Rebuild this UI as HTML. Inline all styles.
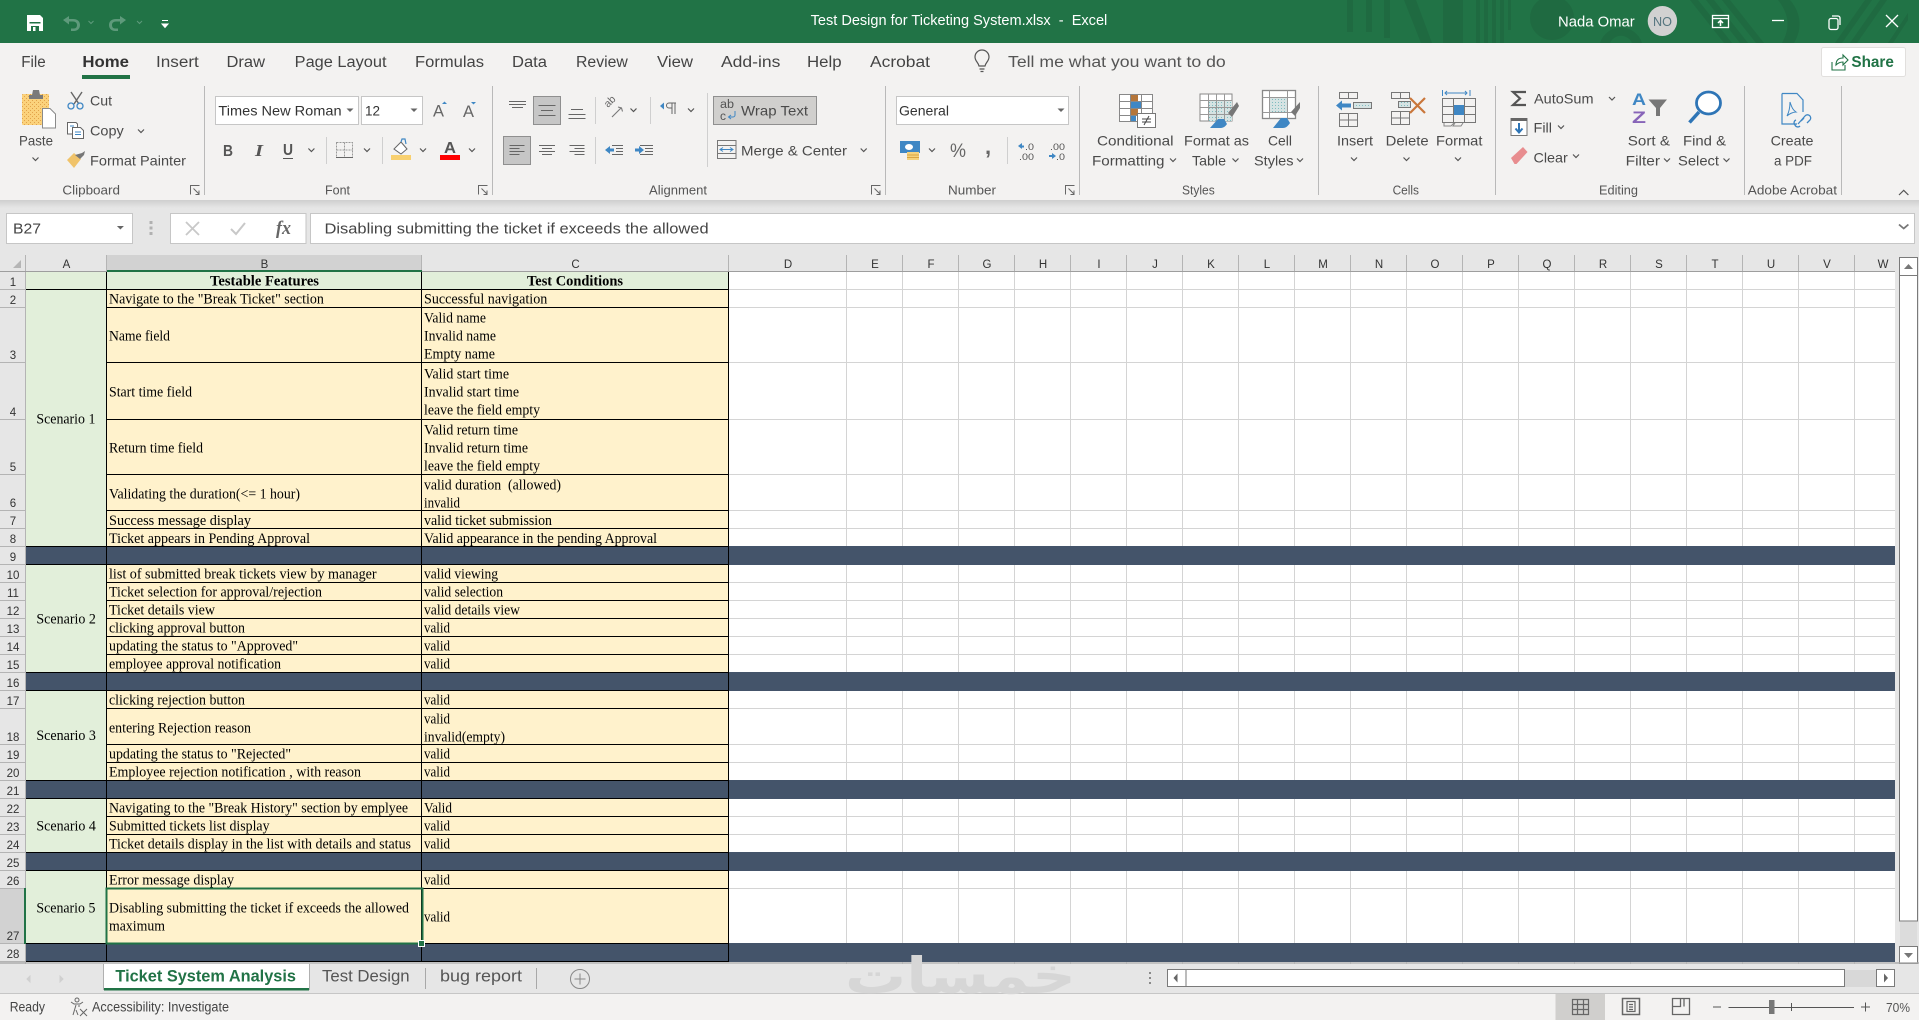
<!DOCTYPE html>
<html><head><meta charset="utf-8"><title>Test Design for Ticketing System.xlsx - Excel</title>
<style>
html,body{margin:0;padding:0;background:#fff;overflow:hidden;width:1919px;height:1020px}
svg{display:block;font-family:"Liberation Sans",sans-serif}
text{white-space:pre}
.t{font-size:15.5px;fill:#444;transform:translateY(.6px)}
.r{font-size:14px;fill:#4a4a4a;transform:translateY(.4px)}
.g{font-size:13px;fill:#555;transform:translateY(.4px)}
.c{font-family:"Liberation Serif",serif;font-size:14.2px;fill:#000;transform:translateY(.6px)}
.b{font-family:"Liberation Serif",serif;font-size:14.2px;font-weight:bold;fill:#000;transform:translateY(.6px)}
.n{font-size:11.5px;fill:#333;text-anchor:middle}
.h{font-size:11.5px;fill:#333;text-anchor:middle}
.ln{stroke-width:1;fill:none}
</style></head><body>
<svg width="1919" height="1020" viewBox="0 0 1919 1020" xmlns="http://www.w3.org/2000/svg">
<defs>
<path id="v" d="M-3,-1.5L0,1.5L3,-1.5" fill="none" stroke="#555" stroke-width="1.2"/>
<path id="dd" d="M-3.5,-1.5H3.5L0,2Z" fill="#666"/>
<g id="lau" fill="none" stroke="#666" stroke-width="1"><path d="M-4.5,4.5V-4.5H4.5M-1.5,-1.5L4,4M4,0.5V4.5H0.5"/></g>
<linearGradient id="sh" x1="0" y1="0" x2="0" y2="1"><stop offset="0" stop-color="#cfcfcf"/><stop offset="1" stop-color="#e6e6e6"/></linearGradient>
<pattern id="dot" width="3" height="3" patternUnits="userSpaceOnUse"><rect width="3" height="3" fill="#d6e3e3"/><rect width="1" height="1" fill="#7fbcc0"/></pattern>
<pattern id="pdot" width="4" height="4" patternUnits="userSpaceOnUse"><rect width="4" height="4" fill="#fbd27c"/><rect width="1" height="1" fill="#e2a24a"/><rect x="2" y="2" width="1" height="1" fill="#e2a24a"/></pattern>
</defs>

<!-- title bar -->
<rect width="1919" height="43" fill="#217346"/>
<g fill="#1f6a41">
<rect x="1347" width="6" height="32"/><rect x="1366" width="6" height="32"/><rect x="1384" width="6" height="38"/>
<path d="M1404,0H1416L1432,43H1421Z"/><rect x="1443" width="20" height="43"/><rect x="1476" width="4" height="43"/><rect x="1484" width="4" height="43"/><rect x="1492" width="4" height="43"/><rect x="1500" width="4" height="43"/><rect x="1508" width="3" height="30"/>
<circle cx="1552" cy="18" r="22"/>
<path d="M1690,0h8l34,43h-8ZM1706,0h8l34,43h-8ZM1722,0h8l34,43h-8Z"/>
<path d="M1778,0h12c12,14 12,30 4,43h-12c8,-14 8,-28 -4,-43Z"/>
<path d="M1835,43l30,-43h7l-30,43ZM1850,43l30,-43h7l-30,43ZM1888,43l20,-30v7l-15,23Z"/>
<path d="M1600,43a22,22 0 0 1 42,0h-10a12,12 0 0 0 -22,0Z"/>
</g>
<!-- QAT -->
<g>
<path d="M27,15H40L43,18V31H27Z" fill="#fff"/><rect x="29.500" y="22" width="11" height="1.500" fill="#217346"/><rect x="31" y="26" width="8" height="5" fill="#217346"/><rect x="33" y="27" width="2.500" height="4" fill="#fff"/>
<path d="M63,20l6,-4v3h4c5,0 7,3 7,6 0,4 -3,6 -6,6h-3v-2.500h3c2,0 3,-1.500 3,-3.500 0,-2 -1.500,-3.500 -4,-3.500h-4v3Z" fill="#5e9a7b"/>
<path d="M126,20l-6,-4v3h-4c-5,0 -7,3 -7,6 0,4 3,6 6,6h3v-2.500h-3c-2,0 -3,-1.500 -3,-3.500 0,-2 1.500,-3.500 4,-3.500h4v3Z" fill="#5e9a7b"/>
<path d="M88.500,21l2.500,2.500L93.500,21M137,21l2.500,2.500L142,21" fill="none" stroke="#5e9a7b" stroke-width="1"/>
<path d="M162,20.500h6M162,24h6l-3,3.500Z" stroke="#fff" stroke-width="1" fill="#fff"/>
</g>
<text x="810.6" y="25" textLength="296.700" lengthAdjust="spacingAndGlyphs" style="font-size:15px;fill:#fff">Test Design for Ticketing System.xlsx  -  Excel</text>
<text x="1558" y="26.500" textLength="76.700" lengthAdjust="spacingAndGlyphs" style="font-size:15px;fill:#fff">Nada Omar</text>
<ellipse cx="1662.400" cy="21" rx="14.700" ry="15" fill="#d1d1d1"/>
<text x="1653" y="26" textLength="19" lengthAdjust="spacingAndGlyphs" style="font-size:13px;fill:#55757f">NO</text>
<g fill="none" stroke="#fff" stroke-width="1.300">
<rect x="1712.500" y="15.500" width="16" height="12"/><path d="M1712.500,18.500H1728.500"/><path d="M1720.500,26V21M1718,23l2.500,-2.500L1723,23" stroke-width="1.500"/>
<path d="M1772,20.500H1784"/>
<rect x="1829" y="18.500" width="9" height="11" rx="2"/><path d="M1832,16h6a2,2 0 0 1 2,2v7"/>
<path d="M1886,15L1898,27M1898,15L1886,27"/>
</g>

<!-- ribbon -->
<rect y="43" width="1919" height="157" fill="#f3f2f1"/>
<text class="t" x="21.2" y="66.500" textLength="24.500" lengthAdjust="spacingAndGlyphs">File</text>
<text class="t" x="82.400" y="66.500" textLength="46.600" lengthAdjust="spacingAndGlyphs" style="font-weight:bold;fill:#333">Home</text>
<rect x="82" y="75" width="48" height="4" fill="#217346"/>
<text class="t" x="156" y="66.500" textLength="42.800" lengthAdjust="spacingAndGlyphs">Insert</text>
<text class="t" x="226.500" y="66.500" textLength="38.500" lengthAdjust="spacingAndGlyphs">Draw</text>
<text class="t" x="294.700" y="66.500" textLength="91.800" lengthAdjust="spacingAndGlyphs">Page Layout</text>
<text class="t" x="415" y="66.500" textLength="69" lengthAdjust="spacingAndGlyphs">Formulas</text>
<text class="t" x="512" y="66.500" textLength="35" lengthAdjust="spacingAndGlyphs">Data</text>
<text class="t" x="576" y="66.500" textLength="51.800" lengthAdjust="spacingAndGlyphs">Review</text>
<text class="t" x="657" y="66.500" textLength="36" lengthAdjust="spacingAndGlyphs">View</text>
<text class="t" x="721" y="66.500" textLength="59.400" lengthAdjust="spacingAndGlyphs">Add-ins</text>
<text class="t" x="807" y="66.500" textLength="34.600" lengthAdjust="spacingAndGlyphs">Help</text>
<text class="t" x="870" y="66.500" textLength="60" lengthAdjust="spacingAndGlyphs">Acrobat</text>
<g fill="none" stroke="#555" stroke-width="1.200"><path d="M979,66c-1,-4 -4,-5 -4,-9a7,7 0 0 1 14,0c0,4 -3,5 -4,9Z"/><path d="M979.500,69h5M980.500,71.500h3"/></g>
<text class="t" x="1008" y="66.500" textLength="217.700" lengthAdjust="spacingAndGlyphs" style="fill:#555">Tell me what you want to do</text>
<rect x="1821.500" y="47.500" width="84" height="29" rx="2" fill="#fff" stroke="#e1dfdd"/>
<path d="M1832,62v8h13v-5M1836,65c0,-5 3,-7 7,-7v-3l5,5l-5,5v-3c-3,0 -5,1 -7,3Z" fill="none" stroke="#217346" stroke-width="1.100"/>
<text x="1851.400" y="67" textLength="42.500" lengthAdjust="spacingAndGlyphs" style="font-size:15.500px;font-weight:bold;fill:#217346">Share</text>

<!-- separators -->
<path d="M204.500,86V195M492.500,86V195M885.500,86V195M1079.500,86V195M1318.500,86V195M1495.500,86V195M1744.500,86V195M1841.500,86V195" stroke="#b9b9b9" fill="none"/>
<path d="M326.500,137V164M382.500,137V164M595.500,97V124M595.500,137V164M650.500,97V124M707.500,93V167M1007.500,137V164" stroke="#cfcfcf" fill="none"/>

<!-- clipboard -->
<rect x="22" y="94" width="27" height="31" rx="1" fill="url(#pdot)"/>
<path d="M29,95h3l1,-5h6l1,5h3v4H29Z" fill="#7a7a7a"/>
<path d="M42.500,108.500H50L55.500,114V128H42.500Z" fill="#fff" stroke="#8a8a8a"/>
<text class="r" x="19" y="145" textLength="34" lengthAdjust="spacingAndGlyphs">Paste</text>
<use href="#v" x="35.500" y="159"/>
<g fill="none"><path d="M71,92L79,104M82,92L74,104" stroke="#666" stroke-width="1.400"/><circle cx="71" cy="106" r="3" stroke="#3f87c4" stroke-width="1.300"/><circle cx="80" cy="106" r="3" stroke="#3f87c4" stroke-width="1.300"/></g>
<text class="r" x="90" y="105" textLength="22" lengthAdjust="spacingAndGlyphs">Cut</text>
<g fill="#fff" stroke="#666"><path d="M67.500,122.500H76L77.500,124V134H67.500Z"/><path d="M72.500,127.500H80.500L83.500,130.500V138.500H72.500Z"/></g><path d="M75,132h6M75,134.500h6M70,126h4" stroke="#3f87c4"/>
<text class="r" x="90" y="135" textLength="33.700" lengthAdjust="spacingAndGlyphs">Copy</text><use href="#v" x="141" y="131"/>
<path d="M67,160l7,-7 7,6 -7,9Z" fill="#f0c36a"/><path d="M75,155l7,-2 3,-2 -1,4 -4,4Z" fill="#777"/>
<text class="r" x="90" y="165" textLength="96" lengthAdjust="spacingAndGlyphs">Format Painter</text>
<text class="g" x="62.400" y="194.300" textLength="57.600" lengthAdjust="spacingAndGlyphs">Clipboard</text><use href="#lau" x="195" y="190"/>

<!-- font -->
<rect x="215.500" y="96.500" width="143" height="28" fill="#fff" stroke="#c6c6c6"/>
<rect x="361.500" y="96.500" width="61" height="28" fill="#fff" stroke="#c6c6c6"/>
<text class="r" x="218.400" y="115" textLength="123.200" lengthAdjust="spacingAndGlyphs" style="fill:#333">Times New Roman</text><use href="#dd" x="350" y="110"/>
<text class="r" x="365" y="115" textLength="15" lengthAdjust="spacingAndGlyphs" style="fill:#333">12</text><use href="#dd" x="414" y="110"/>
<text x="433" y="116.500" textLength="11" lengthAdjust="spacingAndGlyphs" style="font-size:17px;fill:#666">A</text><path d="M442,104h5l-2.500,-2.500Z" fill="#3f87c4"/>
<text x="463" y="117" textLength="11" lengthAdjust="spacingAndGlyphs" style="font-size:17px;fill:#666">A</text><path d="M471,102h5l-2.500,2.500Z" fill="#3f87c4"/>
<text x="223" y="156" style="font-size:16px;font-weight:bold;fill:#555" textLength="10" lengthAdjust="spacingAndGlyphs">B</text>
<text x="255" y="156" style="font-size:17px;font-weight:bold;font-style:italic;font-family:'Liberation Serif',serif;fill:#555" textLength="8" lengthAdjust="spacingAndGlyphs">I</text>
<text x="283" y="155" style="font-size:15.500px;font-weight:bold;fill:#555" textLength="10" lengthAdjust="spacingAndGlyphs">U</text><path d="M283,158.500H293" stroke="#555"/><use href="#v" x="311.400" y="150"/>
<path d="M336.500,142.500H352.500V157.500H336.500ZM344.500,142.500V157.500M336.500,150H352.500" fill="none" stroke="#999" stroke-dasharray="2 1"/><path d="M336,157.500H353" stroke="#666"/><use href="#v" x="367" y="150"/>
<path d="M394,149l7,-7 6,7 -6,5Z" fill="#fff" stroke="#666"/><path d="M401,142l1,-3h3l1,5" fill="none" stroke="#3f87c4" stroke-width="1.200"/>
<rect x="391" y="155" width="20" height="5" fill="#f8d06f"/><use href="#v" x="423" y="150"/>
<text x="444" y="153" textLength="12" lengthAdjust="spacingAndGlyphs" style="font-size:15.500px;font-weight:bold;fill:#555">A</text><rect x="440" y="155" width="20" height="5" fill="#f00"/><use href="#v" x="472" y="150"/>
<text class="g" x="325" y="194.300" textLength="25" lengthAdjust="spacingAndGlyphs">Font</text><use href="#lau" x="483" y="190"/>

<!-- alignment -->
<rect x="533.500" y="96.500" width="27" height="28" fill="#c6c6c6" stroke="#8f8f8f"/>
<rect x="503.500" y="136.500" width="27" height="28" fill="#c6c6c6" stroke="#8f8f8f"/>
<path d="M509,101.500h17M509,104.500h17M512,107.500h11M538.500,105.500h17M541,110.500h12M538.500,115.500h17M571,109.500h12M568.500,114.500h17M568.500,118.500h17M509.500,145.500h15M509.500,148.500h10M509.500,151.500h15M509.500,154.500h10M539,145.500h16M542,148.500h10M539,151.500h16M542,154.500h10M569.500,145.500h15M574.500,148.500h10M569.500,151.500h15M574.500,154.500h10" stroke="#666" fill="none"/>
<text x="0" y="0" transform="translate(608,108) rotate(-45)" style="font-size:10.500px;fill:#666">ab</text><path d="M612,117l9,-9M618,107l3.500,1 1,3.500" fill="none" stroke="#777" stroke-width="1.100"/><use href="#v" x="633.500" y="110"/>
<path d="M660,106l4,-3.500v7Z" fill="#3f87c4"/><path d="M669,103h7M672,103v11M675,103v11M669,103a2.500,2.500 0 0 0 0,5h3" fill="none" stroke="#666"/><use href="#v" x="691" y="110"/>
<path d="M612,145.500h11M616,148.500h7M616,151.500h7M612,154.500h11M640,145.500h13M645,148.500h8M645,151.500h8M640,154.500h13" stroke="#666" fill="none"/>
<path d="M605,150l5,-4v2.500h4v3h-4V154Z" fill="#3f87c4"/><path d="M644,150l-5,-4v2.500h-4v3h4V154Z" fill="#3f87c4"/>
<rect x="713.500" y="96.500" width="103" height="28" fill="#d0cfcd" stroke="#8f8f8f"/>
<text x="720" y="108" textLength="14" lengthAdjust="spacingAndGlyphs" style="font-size:11.500px;fill:#555">ab</text><text x="720" y="120" textLength="6" lengthAdjust="spacingAndGlyphs" style="font-size:11.500px;fill:#555">c</text>
<path d="M735,111v4a2,2 0 0 1 -2,2h-4M731,115l-2.500,2 2.500,2" fill="none" stroke="#3f87c4"/>
<text class="r" x="741" y="115" textLength="67" lengthAdjust="spacingAndGlyphs">Wrap Text</text>
<path d="M717.500,140.500H736V158.500H717.500ZM717.500,145.500H736M717.500,153.500H736" fill="none" stroke="#777"/><path d="M720,149.500h13M723,147.500l-3,2 3,2M730,147.500l3,2 -3,2" fill="none" stroke="#3f87c4"/>
<text class="r" x="741" y="155" textLength="106" lengthAdjust="spacingAndGlyphs">Merge &amp; Center</text><use href="#v" x="863.700" y="150"/>
<text class="g" x="649" y="194.300" textLength="58" lengthAdjust="spacingAndGlyphs">Alignment</text><use href="#lau" x="876" y="190"/>

<!-- number -->
<rect x="896.500" y="96.500" width="172" height="28" fill="#fff" stroke="#c6c6c6"/>
<text class="r" x="899" y="115" textLength="50" lengthAdjust="spacingAndGlyphs" style="fill:#333">General</text><use href="#dd" x="1061" y="110"/>
<rect x="900" y="141" width="20" height="12" fill="#3f87c4"/><ellipse cx="909" cy="147" rx="4" ry="3" fill="#fff"/><rect x="907" y="152" width="12" height="8" fill="#f4d27c"/><path d="M907,155h12M907,157.500h12" stroke="#d9a441"/>
<use href="#v" x="932" y="150"/>
<text x="950" y="157" textLength="16" lengthAdjust="spacingAndGlyphs" style="font-size:19px;fill:#666">%</text>
<text x="985" y="154" style="font-size:22px;font-weight:bold;fill:#666">,</text>
<text x="1025" y="150" textLength="9" lengthAdjust="spacingAndGlyphs" style="font-size:9.500px;fill:#555">.0</text><text x="1019" y="160" textLength="15" lengthAdjust="spacingAndGlyphs" style="font-size:9.500px;fill:#555">.00</text><path d="M1018,146l4,-3v6Z" fill="#3f87c4"/><path d="M1021,145.500h3v2h-3Z" fill="#3f87c4"/>
<text x="1050" y="150" textLength="15" lengthAdjust="spacingAndGlyphs" style="font-size:9.500px;fill:#555">.00</text><text x="1056" y="160" textLength="9" lengthAdjust="spacingAndGlyphs" style="font-size:9.500px;fill:#555">.0</text><path d="M1056,156l-4,-3v6Z" fill="#3f87c4"/><path d="M1049,155h3v2h-3Z" fill="#3f87c4"/>
<text class="g" x="948" y="194.300" textLength="48" lengthAdjust="spacingAndGlyphs">Number</text><use href="#lau" x="1070" y="190"/>

<!-- styles -->
<rect x="1119.500" y="94.500" width="33" height="27" fill="#fff" stroke="#888"/>
<rect x="1130" y="95" width="8" height="6" fill="#b5763a"/><rect x="1130" y="102" width="11" height="6" fill="#3f87c4"/><rect x="1130" y="109" width="8" height="6" fill="#b5763a"/><rect x="1130" y="116" width="6" height="5" fill="#3f87c4"/>
<path d="M1130.500,94.500V121.500M1141.500,94.500V121.500M1119.500,101.500H1152.500M1119.500,108.500H1152.500M1119.500,115.500H1152.500" stroke="#888" fill="none"/>
<rect x="1137.500" y="113.500" width="18" height="14" fill="#fff" stroke="#777"/><path d="M1142,119h9M1142,122h9M1149,116l-5,9" stroke="#444" fill="none"/>
<text class="r" x="1097" y="145" textLength="76.500" lengthAdjust="spacingAndGlyphs">Conditional</text>
<text class="r" x="1092" y="165" textLength="72.500" lengthAdjust="spacingAndGlyphs">Formatting</text><use href="#v" x="1173" y="160"/>
<rect x="1200" y="94" width="32" height="27" fill="#fff" stroke="#888"/><rect x="1208" y="101" width="24" height="20" fill="url(#dot)"/>
<path d="M1208.500,94V121M1216.500,94V121M1224.500,94V121M1200,100.500H1232M1200,107.500H1232M1200,114.500H1232" stroke="#999" fill="none"/>
<path d="M1237,102l-9,11 4,4 7,-11Z" fill="#777"/><path d="M1210,128l8,-9 6,0 3,5c-2,3 -4,4 -7,4Z" fill="#3f87c4"/>
<text class="r" x="1184" y="145" textLength="65" lengthAdjust="spacingAndGlyphs">Format as</text>
<text class="r" x="1192" y="165" textLength="34" lengthAdjust="spacingAndGlyphs">Table</text><use href="#v" x="1235.500" y="160"/>
<rect x="1262.500" y="90.500" width="33" height="28" fill="#fff" stroke="#888" stroke-width="1.300"/><rect x="1269" y="98" width="18" height="14" fill="url(#dot)"/><path d="M1262.500,97.500H1295.500M1262.500,112.500H1295.500M1269.500,90.500V118.500M1287.500,90.500V118.500" stroke="#999" fill="none"/>
<path d="M1300,102l-9,10 4,4 5,-8Z" fill="#777"/><path d="M1273,128l8,-10 6,0 3,5c-2,3 -4,5 -7,5Z" fill="#3f87c4"/>
<text class="r" x="1268" y="145" textLength="24" lengthAdjust="spacingAndGlyphs">Cell</text>
<text class="r" x="1254" y="165" textLength="39.500" lengthAdjust="spacingAndGlyphs">Styles</text><use href="#v" x="1300" y="160"/>
<text class="g" x="1182" y="194.300" textLength="32.700" lengthAdjust="spacingAndGlyphs">Styles</text>

<!-- cells -->
<g fill="none" stroke="#777">
<path d="M1339.500,92.500h18v6h-18ZM1348.500,92.500v6M1339.500,113.500h18v13h-18ZM1339.500,120h18M1348.500,113.500v13"/>
<path d="M1391.500,92.500h18v6h-18ZM1400.500,92.500v6M1391.500,111.500h18v13h-18ZM1391.500,118h18M1400.500,111.500v13"/>
<rect x="1442.500" y="98.500" width="33" height="24"/><path d="M1453.500,98.500v24M1464.500,98.500v24M1442.500,106.500h33M1442.500,114.500h33"/>
</g>
<rect x="1353.500" y="102.500" width="18" height="6" fill="url(#dot)" stroke="#777"/>
<path d="M1336,105.500l6,-5v3h9v4h-9v3Z" fill="#3f87c4"/>
<text class="r" x="1337" y="145" textLength="36" lengthAdjust="spacingAndGlyphs">Insert</text><use href="#v" x="1354" y="159"/>
<rect x="1398.500" y="101.500" width="12" height="6" fill="url(#dot)" stroke="#777"/>
<path d="M1410,98L1425,113M1425,98L1410,113" stroke="#c9763a" stroke-width="2.200"/>
<text class="r" x="1385.700" y="145" textLength="42.900" lengthAdjust="spacingAndGlyphs">Delete</text><use href="#v" x="1406.500" y="159"/>
<path d="M1442.500,90v6M1470,90v6M1445,93h22M1447,91l-2,2 2,2M1465,91l2,2 -2,2" fill="none" stroke="#3f87c4"/><rect x="1454" y="105" width="10" height="10" fill="#3f87c4"/>
<path d="M1444,123v3h7l3,-3M1455,123l-2,3h8l2,-3" fill="none" stroke="#888"/>
<text class="r" x="1436" y="145" textLength="46.400" lengthAdjust="spacingAndGlyphs">Format</text><use href="#v" x="1458" y="159"/>
<text class="g" x="1392.600" y="194.300" textLength="26.400" lengthAdjust="spacingAndGlyphs">Cells</text>

<!-- editing -->
<path d="M1526,92H1513L1520,98.500L1513,105H1526" fill="none" stroke="#555" stroke-width="2.200"/>
<text class="r" x="1534" y="103.300" textLength="59.500" lengthAdjust="spacingAndGlyphs">AutoSum</text><use href="#v" x="1612" y="98.500"/>
<rect x="1511" y="118.500" width="16" height="17" fill="#fff" stroke="#777"/><rect x="1511" y="118" width="16" height="3" fill="#666"/><path d="M1519,123v9M1515.500,128.500l3.500,4 3.500,-4" fill="none" stroke="#2e75b6" stroke-width="2"/>
<text class="r" x="1533.500" y="132" textLength="18.500" lengthAdjust="spacingAndGlyphs">Fill</text><use href="#v" x="1561" y="127"/>
<path d="M1511,158l12,-11 4.500,5 -11,12h-2Z" fill="#e88d8f"/>
<text class="r" x="1533.500" y="162" textLength="34.300" lengthAdjust="spacingAndGlyphs">Clear</text><use href="#v" x="1576" y="156"/>
<text x="1632" y="105" textLength="14" lengthAdjust="spacingAndGlyphs" style="font-size:17px;font-weight:bold;fill:#3f87c4">A</text>
<text x="1632" y="123" textLength="14" lengthAdjust="spacingAndGlyphs" style="font-size:17px;font-weight:bold;fill:#8764b8">Z</text>
<path d="M1648.500,99.500H1667L1660,108V116H1656V108Z" fill="#777"/>
<text class="r" x="1627.800" y="145" textLength="42.200" lengthAdjust="spacingAndGlyphs">Sort &amp;</text>
<text class="r" x="1625.700" y="165" textLength="34.300" lengthAdjust="spacingAndGlyphs">Filter</text><use href="#v" x="1667" y="160"/>
<ellipse cx="1708.500" cy="103" rx="12" ry="11" fill="#fff" stroke="#2e75b6" stroke-width="2.800"/><path d="M1699,112L1689.500,122.500" stroke="#2e75b6" stroke-width="3.500"/>
<text class="r" x="1683" y="145" textLength="43" lengthAdjust="spacingAndGlyphs">Find &amp;</text>
<text class="r" x="1678" y="165" textLength="41" lengthAdjust="spacingAndGlyphs">Select</text><use href="#v" x="1726.500" y="160"/>
<text class="g" x="1599" y="194.300" textLength="39" lengthAdjust="spacingAndGlyphs">Editing</text>

<!-- acrobat -->
<path d="M1782,93.500H1797L1803,100V112M1782,93.500V124H1797" fill="none" stroke="#3f87c4" stroke-width="1.200"/>
<path d="M1790,102c2,6 3,8 6,10c-3,0 -7,2 -9,4c2,-4 3,-9 3,-14Z" fill="none" stroke="#3f87c4"/>
<path d="M1798,124l7,-8a3,3 0 0 1 5,4l-3,3M1804,118l-3,3M1796,120a3,3 0 0 0 -1,5a3,3 0 0 0 5,1" fill="none" stroke="#3f87c4" stroke-width="1.300"/>
<text class="r" x="1770.600" y="145" textLength="42.900" lengthAdjust="spacingAndGlyphs">Create</text>
<text class="r" x="1774" y="165" textLength="38" lengthAdjust="spacingAndGlyphs">a PDF</text>
<text class="g" x="1747.800" y="194.300" textLength="89.200" lengthAdjust="spacingAndGlyphs">Adobe Acrobat</text>
<path d="M1899,195l4.700,-4.700 4.700,4.700" fill="none" stroke="#555" stroke-width="1.200"/>

<!-- formula bar -->
<rect y="200" width="1919" height="764" fill="#e6e6e6"/>
<rect y="200" width="1919" height="8" fill="url(#sh)"/>
<g fill="#fff" stroke="#c6c6c6"><rect x="6.500" y="213.500" width="126" height="30"/><rect x="170.500" y="213.500" width="135.500" height="30"/><rect x="310.500" y="213.500" width="1604" height="30"/></g>
<text class="r" x="13" y="233" textLength="28" lengthAdjust="spacingAndGlyphs" style="font-size:15px;fill:#444">B27</text><use href="#dd" x="120.400" y="227.500"/>
<rect x="149.500" y="221" width="3" height="3" fill="#b1b1b1"/><rect x="149.500" y="226.500" width="3" height="3" fill="#b1b1b1"/><rect x="149.500" y="232" width="3" height="3" fill="#b1b1b1"/>
<path d="M186,222L199,235M199,222L186,235" stroke="#c8c8c8" stroke-width="1.800"/>
<path d="M231,229l5,5 9,-11" fill="none" stroke="#c8c8c8" stroke-width="2"/>
<text x="276" y="234" style="font-family:'Liberation Serif',serif;font-style:italic;font-weight:bold;font-size:19px;fill:#666" textLength="15" lengthAdjust="spacingAndGlyphs">fx</text>
<text class="r" x="324.500" y="233.300" textLength="384.100" lengthAdjust="spacingAndGlyphs" style="font-size:15px;fill:#444">Disabling submitting the ticket if exceeds the allowed</text>
<path d="M1899,224.500l4.700,4 4.700,-4" fill="none" stroke="#777" stroke-width="1.800"/>

<!-- column headers -->
<rect x="107" y="255" width="315" height="16" fill="#d2d2d2"/>
<path d="M25.500,255V271M106.500,255V271M421.500,255V271M728.500,255V271M846.500,255V271M902.500,255V271M958.500,255V271M1014.500,255V271M1070.500,255V271M1126.500,255V271M1182.500,255V271M1238.500,255V271M1294.500,255V271M1350.500,255V271M1406.500,255V271M1462.500,255V271M1518.500,255V271M1574.500,255V271M1630.500,255V271M1686.500,255V271M1742.500,255V271M1798.500,255V271M1854.500,255V271" stroke="#b4b4b4" fill="none"/>
<path d="M21,260V268H13Z" fill="#b5b5b5"/>
<rect x="0" y="271" width="1895" height="1" fill="#9e9e9e"/>
<rect x="107" y="270" width="315" height="2" fill="#217346"/>
<text class="h" x="66.500" y="268">A</text><text class="h" x="264.500" y="268">B</text><text class="h" x="575.500" y="268">C</text><text class="h" x="788" y="268">D</text><text class="h" x="875" y="268">E</text><text class="h" x="931" y="268">F</text><text class="h" x="987" y="268">G</text><text class="h" x="1043" y="268">H</text><text class="h" x="1099" y="268">I</text><text class="h" x="1155" y="268">J</text><text class="h" x="1211" y="268">K</text><text class="h" x="1267" y="268">L</text><text class="h" x="1323" y="268">M</text><text class="h" x="1379" y="268">N</text><text class="h" x="1435" y="268">O</text><text class="h" x="1491" y="268">P</text><text class="h" x="1547" y="268">Q</text><text class="h" x="1603" y="268">R</text><text class="h" x="1659" y="268">S</text><text class="h" x="1715" y="268">T</text><text class="h" x="1771" y="268">U</text><text class="h" x="1827" y="268">V</text><text class="h" x="1883" y="268">W</text>

<!-- grid -->
<rect x="26" y="272" width="1869" height="692" fill="#fff"/>
<path d="M846.500,272V964M902.500,272V964M958.500,272V964M1014.500,272V964M1070.500,272V964M1126.500,272V964M1182.500,272V964M1238.500,272V964M1294.500,272V964M1350.500,272V964M1406.500,272V964M1462.500,272V964M1518.500,272V964M1574.500,272V964M1630.500,272V964M1686.500,272V964M1742.500,272V964M1798.500,272V964M1854.500,272V964M729,289.500H1895M729,307.500H1895M729,362.500H1895M729,419.500H1895M729,474.500H1895M729,510.500H1895M729,528.500H1895M729,582.500H1895M729,600.500H1895M729,618.500H1895M729,636.500H1895M729,654.500H1895M729,708.500H1895M729,744.500H1895M729,762.500H1895M729,816.500H1895M729,834.500H1895M729,888.500H1895M729,943.500H1895" stroke="#d4d4d4" fill="none"/>

<!-- fills -->
<rect x="26" y="272" width="702" height="18" fill="#e2efda"/>
<rect x="107" y="290" width="621" height="256" fill="#fff2cc"/>
<rect x="107" y="565" width="621" height="107" fill="#fff2cc"/>
<rect x="107" y="691" width="621" height="89" fill="#fff2cc"/>
<rect x="107" y="799" width="621" height="53" fill="#fff2cc"/>
<rect x="107" y="871" width="621" height="72" fill="#fff2cc"/>
<g fill="#e2efda"><rect x="26" y="290" width="80" height="256"/><rect x="26" y="565" width="80" height="107"/><rect x="26" y="691" width="80" height="89"/><rect x="26" y="799" width="80" height="53"/><rect x="26" y="871" width="80" height="72"/></g>
<g fill="#44546a"><rect x="26" y="546" width="1869" height="19"/><rect x="26" y="672" width="1869" height="19"/><rect x="26" y="780" width="1869" height="19"/><rect x="26" y="852" width="1869" height="19"/><rect x="26" y="943" width="1869" height="19"/></g>
<path d="M106.500,272V962M421.500,272V962M728.500,272V962" stroke="#000" fill="none"/>
<path d="M26,289.500H728M107,307.500H728M107,362.500H728M107,419.500H728M107,474.500H728M107,510.500H728M107,528.500H728M26,546.500H728M26,564.500H728M107,582.500H728M107,600.500H728M107,618.500H728M107,636.500H728M107,654.500H728M26,672.500H728M26,690.500H728M107,708.500H728M107,744.500H728M107,762.500H728M26,780.500H728M26,798.500H728M107,816.500H728M107,834.500H728M26,852.500H728M26,870.500H728M107,888.500H728M26,943.500H728M26,961.500H728" stroke="#000" fill="none"/>

<!-- row headers -->
<rect x="0" y="889" width="25" height="54" fill="#d2d2d2"/>
<path d="M0,289.500H25M0,307.500H25M0,362.500H25M0,419.500H25M0,474.500H25M0,510.500H25M0,528.500H25M0,546.500H25M0,564.500H25M0,582.500H25M0,600.500H25M0,618.500H25M0,636.500H25M0,654.500H25M0,672.500H25M0,690.500H25M0,708.500H25M0,744.500H25M0,762.500H25M0,780.500H25M0,798.500H25M0,816.500H25M0,834.500H25M0,852.500H25M0,870.500H25M0,888.500H25M0,943.500H25M0,961.500H25M25.500,272V964" stroke="#b4b4b4" fill="none"/>
<rect x="24" y="888" width="2" height="56" fill="#217346"/>
<g>
<text class="n" x="13" y="286">1</text><text class="n" x="13" y="304">2</text><text class="n" x="13" y="359">3</text><text class="n" x="13" y="416">4</text><text class="n" x="13" y="471">5</text><text class="n" x="13" y="507">6</text><text class="n" x="13" y="525">7</text><text class="n" x="13" y="543">8</text><text class="n" x="13" y="561">9</text><text class="n" x="13" y="579">10</text><text class="n" x="13" y="597">11</text><text class="n" x="13" y="615">12</text><text class="n" x="13" y="633">13</text><text class="n" x="13" y="651">14</text><text class="n" x="13" y="669">15</text><text class="n" x="13" y="687">16</text><text class="n" x="13" y="705">17</text><text class="n" x="13" y="741">18</text><text class="n" x="13" y="759">19</text><text class="n" x="13" y="777">20</text><text class="n" x="13" y="795">21</text><text class="n" x="13" y="813">22</text><text class="n" x="13" y="831">23</text><text class="n" x="13" y="849">24</text><text class="n" x="13" y="867">25</text><text class="n" x="13" y="885">26</text><text class="n" x="13" y="940">27</text><text class="n" x="13" y="958">28</text>
</g>

<!-- cell text -->
<text class="b" x="210" y="285" textLength="109" lengthAdjust="spacingAndGlyphs">Testable Features</text>
<text class="b" x="527" y="285" textLength="96" lengthAdjust="spacingAndGlyphs">Test Conditions</text>
<text class="c" x="36.400" y="422.700" textLength="59" lengthAdjust="spacingAndGlyphs">Scenario 1</text>
<text class="c" x="36.400" y="623" textLength="59.500" lengthAdjust="spacingAndGlyphs">Scenario 2</text>
<text class="c" x="36.400" y="739.300" textLength="59.500" lengthAdjust="spacingAndGlyphs">Scenario 3</text>
<text class="c" x="36.400" y="830" textLength="59.500" lengthAdjust="spacingAndGlyphs">Scenario 4</text>
<text class="c" x="36.400" y="911.700" textLength="59" lengthAdjust="spacingAndGlyphs">Scenario 5</text>

<text class="c" x="109" y="303" textLength="214.800" lengthAdjust="spacingAndGlyphs">Navigate to the "Break Ticket" section</text>
<text class="c" x="424" y="303" textLength="123.300" lengthAdjust="spacingAndGlyphs">Successful navigation</text>
<text class="c" x="109" y="340" textLength="61" lengthAdjust="spacingAndGlyphs">Name field</text>
<text class="c" x="424" y="322" textLength="62" lengthAdjust="spacingAndGlyphs">Valid name</text>
<text class="c" x="424" y="340" textLength="72" lengthAdjust="spacingAndGlyphs">Invalid name</text>
<text class="c" x="424" y="358" textLength="71" lengthAdjust="spacingAndGlyphs">Empty name</text>
<text class="c" x="109" y="396" textLength="83" lengthAdjust="spacingAndGlyphs">Start time field</text>
<text class="c" x="424" y="378" textLength="85" lengthAdjust="spacingAndGlyphs">Valid start time</text>
<text class="c" x="424" y="396" textLength="95" lengthAdjust="spacingAndGlyphs">Invalid start time</text>
<text class="c" x="424" y="414" textLength="116" lengthAdjust="spacingAndGlyphs">leave the field empty</text>
<text class="c" x="109" y="452" textLength="94" lengthAdjust="spacingAndGlyphs">Return time field</text>
<text class="c" x="424" y="434" textLength="94" lengthAdjust="spacingAndGlyphs">Valid return time</text>
<text class="c" x="424" y="452" textLength="104" lengthAdjust="spacingAndGlyphs">Invalid return time</text>
<text class="c" x="424" y="470" textLength="116" lengthAdjust="spacingAndGlyphs">leave the field empty</text>
<text class="c" x="109" y="498" textLength="191" lengthAdjust="spacingAndGlyphs">Validating the duration(&lt;= 1 hour)</text>
<text class="c" x="424" y="489" textLength="137" lengthAdjust="spacingAndGlyphs">valid duration  (allowed)</text>
<text class="c" x="424" y="507" textLength="36" lengthAdjust="spacingAndGlyphs">invalid</text>
<text class="c" x="109" y="524.500" textLength="142" lengthAdjust="spacingAndGlyphs">Success message display</text>
<text class="c" x="424" y="524.500" textLength="128" lengthAdjust="spacingAndGlyphs">valid ticket submission</text>
<text class="c" x="109" y="542.500" textLength="201" lengthAdjust="spacingAndGlyphs">Ticket appears in Pending Approval</text>
<text class="c" x="424" y="542.500" textLength="233" lengthAdjust="spacingAndGlyphs">Valid appearance in the pending Approval</text>

<text class="c" x="109" y="578" textLength="267.600" lengthAdjust="spacingAndGlyphs">list of submitted break tickets view by manager</text>
<text class="c" x="424" y="578" textLength="74" lengthAdjust="spacingAndGlyphs">valid viewing</text>
<text class="c" x="109" y="596" textLength="213" lengthAdjust="spacingAndGlyphs">Ticket selection for approval/rejection</text>
<text class="c" x="424" y="596" textLength="79" lengthAdjust="spacingAndGlyphs">valid selection</text>
<text class="c" x="109" y="614" textLength="106" lengthAdjust="spacingAndGlyphs">Ticket details view</text>
<text class="c" x="424" y="614" textLength="96" lengthAdjust="spacingAndGlyphs">valid details view</text>
<text class="c" x="109" y="632" textLength="136" lengthAdjust="spacingAndGlyphs">clicking approval button</text>
<text class="c" x="424" y="632" textLength="26" lengthAdjust="spacingAndGlyphs">valid</text>
<text class="c" x="109" y="650" textLength="189" lengthAdjust="spacingAndGlyphs">updating the status to "Approved"</text>
<text class="c" x="424" y="650" textLength="26" lengthAdjust="spacingAndGlyphs">valid</text>
<text class="c" x="109" y="668" textLength="172" lengthAdjust="spacingAndGlyphs">employee approval notification</text>
<text class="c" x="424" y="668" textLength="26" lengthAdjust="spacingAndGlyphs">valid</text>

<text class="c" x="109" y="704" textLength="136" lengthAdjust="spacingAndGlyphs">clicking rejection button</text>
<text class="c" x="424" y="704" textLength="26" lengthAdjust="spacingAndGlyphs">valid</text>
<text class="c" x="109" y="732" textLength="142" lengthAdjust="spacingAndGlyphs">entering Rejection reason</text>
<text class="c" x="424" y="723" textLength="26" lengthAdjust="spacingAndGlyphs">valid</text>
<text class="c" x="424" y="741" textLength="81" lengthAdjust="spacingAndGlyphs">invalid(empty)</text>
<text class="c" x="109" y="758" textLength="182" lengthAdjust="spacingAndGlyphs">updating the status to "Rejected"</text>
<text class="c" x="424" y="758" textLength="26" lengthAdjust="spacingAndGlyphs">valid</text>
<text class="c" x="109" y="776" textLength="252" lengthAdjust="spacingAndGlyphs">Employee rejection notification , with reason</text>
<text class="c" x="424" y="776" textLength="26" lengthAdjust="spacingAndGlyphs">valid</text>

<text class="c" x="109" y="812" textLength="299" lengthAdjust="spacingAndGlyphs">Navigating to the "Break History" section by emplyee</text>
<text class="c" x="424" y="812" textLength="28" lengthAdjust="spacingAndGlyphs">Valid</text>
<text class="c" x="109" y="830" textLength="160.500" lengthAdjust="spacingAndGlyphs">Submitted tickets list display</text>
<text class="c" x="424" y="830" textLength="26" lengthAdjust="spacingAndGlyphs">valid</text>
<text class="c" x="109" y="848" textLength="302" lengthAdjust="spacingAndGlyphs">Ticket details display in the list with details and status</text>
<text class="c" x="424" y="848" textLength="26" lengthAdjust="spacingAndGlyphs">valid</text>

<text class="c" x="109" y="884" textLength="125" lengthAdjust="spacingAndGlyphs">Error message display</text>
<text class="c" x="424" y="884" textLength="26" lengthAdjust="spacingAndGlyphs">valid</text>
<text class="c" x="109" y="912" textLength="300" lengthAdjust="spacingAndGlyphs">Disabling submitting the ticket if exceeds the allowed</text>
<text class="c" x="109" y="930" textLength="56" lengthAdjust="spacingAndGlyphs">maximum</text>
<text class="c" x="424" y="921" textLength="26" lengthAdjust="spacingAndGlyphs">valid</text>

<!-- selection -->
<rect x="106.500" y="888.500" width="316" height="55" fill="none" stroke="#217346" stroke-width="2"/>
<rect x="418.500" y="940.500" width="6" height="6" fill="#217346" stroke="#fff"/>

<!-- vertical scroll -->
<rect x="1896" y="255" width="23" height="709" fill="#e6e6e6"/>
<rect x="1899.500" y="275" width="18" height="646" fill="#fff" stroke="#7a7a7a"/>
<rect x="1900" y="922" width="17" height="24" fill="#dcdcdc"/>
<rect x="1899.500" y="257.500" width="18" height="18" fill="#fff" stroke="#7a7a7a"/>
<path d="M1904,269l4.500,-5 4.500,5Z" fill="#777"/>
<rect x="1899.500" y="946.500" width="18" height="17" fill="#fff" stroke="#7a7a7a"/>
<path d="M1904,953l4.500,5 4.500,-5Z" fill="#777"/>

<!-- tab bar -->
<rect y="962" width="1919" height="2" fill="#a8a8a8" opacity=".7"/>
<rect y="964" width="1919" height="29" fill="#e6e6e6"/>
<rect y="993" width="1919" height="27" fill="#f3f2f1"/>
<rect y="993" width="1919" height="1" fill="#c6c6c6"/>
<text x="845" y="993" textLength="231" lengthAdjust="spacingAndGlyphs" style="font-family:'DejaVu Sans',sans-serif;font-size:50px;font-weight:bold;fill:#d6d6d6">خمسات</text>
<path d="M30,976l-3,3 3,3v-6ZM60,976l3,3 -3,3v-6Z" fill="#d0d0d0" stroke="#d0d0d0"/>
<rect x="104" y="964" width="205" height="24" fill="#fff"/>
<rect x="104" y="988" width="205" height="2.500" fill="#217346"/>
<path d="M103.500,964V990M309.500,964V990" stroke="#b0b0b0"/>
<text x="115.400" y="981.500" textLength="180.600" lengthAdjust="spacingAndGlyphs" style="font-size:17px;font-weight:bold;fill:#217346">Ticket System Analysis</text>
<text x="322" y="981.500" textLength="87.600" lengthAdjust="spacingAndGlyphs" style="font-size:17px;fill:#555">Test Design</text>
<text x="440" y="981.500" textLength="82" lengthAdjust="spacingAndGlyphs" style="font-size:17px;fill:#555">bug report</text>
<path d="M425.500,968V989M536.500,968V989" stroke="#a8a8a8"/>
<circle cx="580" cy="979" r="9.500" fill="none" stroke="#888"/><path d="M580,973.500V984.500M574.500,979H585.500" stroke="#888"/>
<g fill="#8a8a8a"><rect x="1149" y="972" width="2" height="2"/><rect x="1149" y="977" width="2" height="2"/><rect x="1149" y="982" width="2" height="2"/></g>

<!-- horizontal scroll -->
<rect x="1186" y="969.500" width="658.500" height="17" fill="#fff" stroke="#7a7a7a"/>
<rect x="1845" y="970" width="31" height="17" fill="#d8d8d8"/>
<rect x="1167.500" y="969.500" width="18.500" height="17" fill="#fff" stroke="#7a7a7a"/>
<path d="M1173.500,978l4,-4.500v9Z" fill="#666"/>
<rect x="1876.500" y="969.500" width="18" height="17" fill="#fff" stroke="#7a7a7a"/>
<path d="M1888,978l-4,-4.500v9Z" fill="#666"/>

<!-- status -->
<text x="9.700" y="1011.500" textLength="35.300" lengthAdjust="spacingAndGlyphs" style="font-size:13.400px;fill:#444">Ready</text>
<g fill="none" stroke="#666"><circle cx="77" cy="1000" r="2"/><path d="M71,1002l3,2h6l3,-2M76,1005l-3,10M79,1005v2M80,1009l7,7M87,1009l-7,7M76,1010l2,5"/></g>
<text x="92" y="1011.500" textLength="137" lengthAdjust="spacingAndGlyphs" style="font-size:13.400px;fill:#444">Accessibility: Investigate</text>
<rect x="1555.500" y="994" width="49.500" height="26" fill="#d0cfcd"/>
<g fill="none" stroke="#666" stroke-width="1.200">
<path d="M1572.500,999.500h16v15h-16ZM1572.500,1004.500h16M1572.500,1009.500h16M1577.500,999.500v15M1583.500,999.500v15"/>
<rect x="1622.500" y="998.500" width="17" height="16" stroke-width="1.500"/><rect x="1627" y="1001.500" width="8" height="10"/><path d="M1629,1004.500h4M1629,1007h4M1629,1009.500h4"/>
<path d="M1672.500,998.500h17v16h-17ZM1672.500,1006.500h8V998.500M1684,998.500v8" stroke-width="1.300"/>
</g>
<path d="M1713,1007h8M1728.500,1007.500H1854M1791.500,1003v8M1861,1007h9M1865.500,1002.500v9" stroke="#555" fill="none"/>
<rect x="1769" y="1000" width="5.500" height="14" fill="#777"/>
<text x="1886" y="1012" textLength="24" lengthAdjust="spacingAndGlyphs" style="font-size:13px;fill:#555">70%</text>
</svg>
</body></html>
